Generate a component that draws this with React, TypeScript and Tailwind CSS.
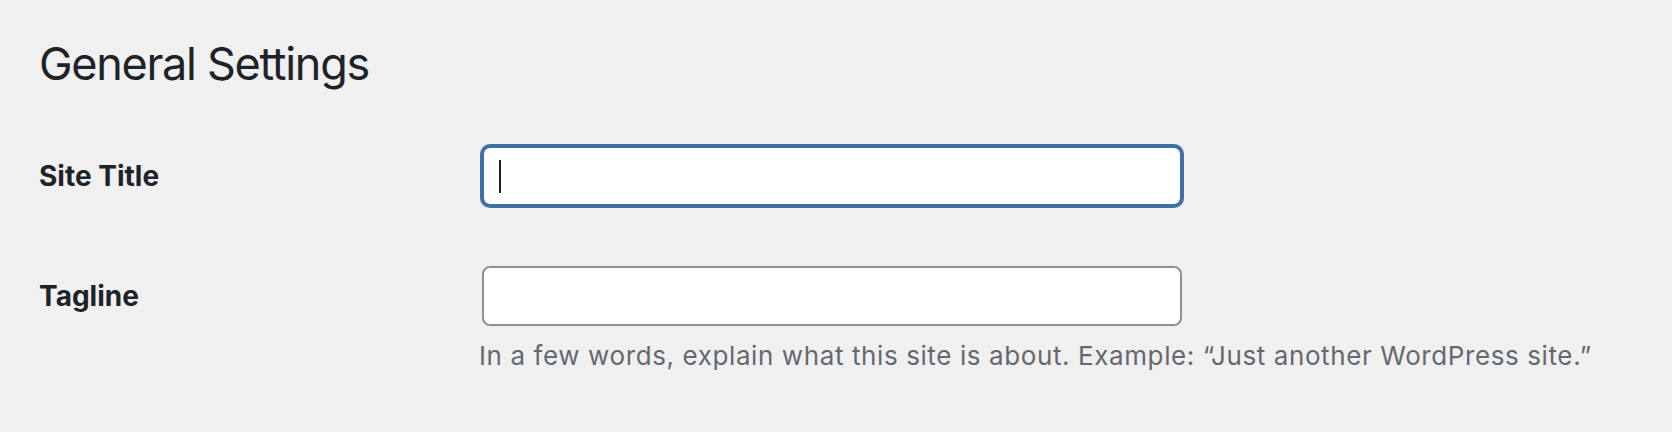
import React from "react";

const font = { fontFamily: "Inter, 'Noto Sans', sans-serif" };

function Field({ label, focused, children }: { label: string; focused?: boolean; children?: React.ReactNode }) {
  return (
    <div className="flex">
      <div className="flex h-[60px] w-[443px] shrink-0 items-center">
        <span className="text-[28px] font-bold leading-none text-[#1d2327]">{label}</span>
      </div>
      <div className="flex flex-col">
        <div
          className={
            focused
              ? "flex h-[60px] w-[700px] items-center rounded-[8px] border-2 border-[#4170a6] bg-white pl-[15px] shadow-[0_0_0_2px_#4170a6]"
              : "flex h-[60px] w-[700px] items-center rounded-[8px] border-2 border-[#8c8f94] bg-white pl-[15px]"
          }
        >
          {focused && <div className="h-[33px] w-[2px] bg-[#1e1e1e]" />}
        </div>
        {children}
      </div>
    </div>
  );
}

export default function App() {
  return (
    <div className="min-h-[432px] w-full bg-[#f0f0f1] pl-[39px] pt-[41px]" style={font}>
      <h1 className="text-[45px] font-normal leading-none tracking-[-1.3px] text-[#1d2327]">General Settings</h1>
      <div className="mt-[60px] flex flex-col gap-[60px]">
        <Field label="Site Title" focused />
        <Field label="Tagline">
          <p className="-ml-[3px] mt-[17px] whitespace-nowrap text-[26px] leading-none tracking-[0.6px] text-[#646970]">
            In a few words, explain what this site is about. Example: “Just another WordPress site.”
          </p>
        </Field>
      </div>
    </div>
  );
}
